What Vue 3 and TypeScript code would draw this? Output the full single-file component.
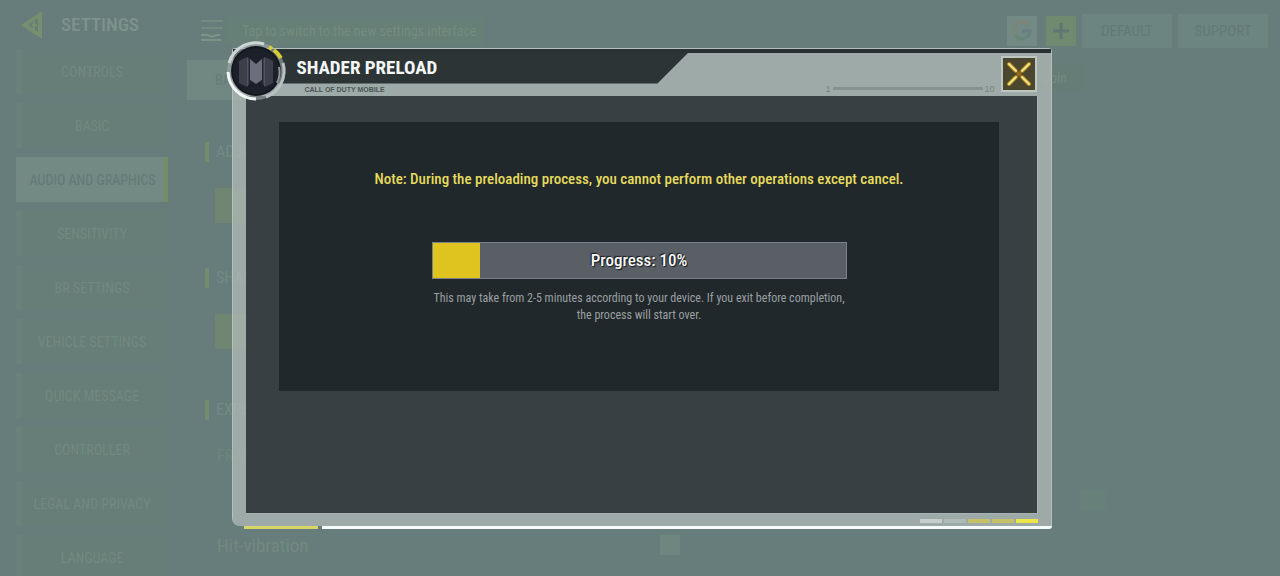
<script setup lang="ts">
import { ref } from 'vue'

interface NavItem {
  label: string
  active?: boolean
}

const navItems: NavItem[] = [
  { label: 'CONTROLS' },
  { label: 'BASIC' },
  { label: 'AUDIO AND GRAPHICS', active: true },
  { label: 'SENSITIVITY' },
  { label: 'BR SETTINGS' },
  { label: 'VEHICLE SETTINGS' },
  { label: 'QUICK MESSAGE' },
  { label: 'CONTROLLER' },
  { label: 'LEGAL AND PRIVACY' },
  { label: 'LANGUAGE' },
]

const progress = ref(10)
const fillWidth = ref(48 / 4.14)
const segments = ['pale', 'dim', 'gold', 'gold', 'bright']
</script>

<template>
  <div class="screen">
    <div class="settings">
      <aside class="sidebar">
        <header class="brand">
          <button class="back" type="button" aria-label="Back">
            <svg width="26" height="32" viewBox="0 0 26 32">
              <path d="M23 2 V30 L2 16 Z M19 9 L9 16 L19 23 Z" fill="#768f6e" fill-rule="evenodd" />
              <path d="M15 12 V20 M13 16 H18" stroke="#768f6e" stroke-width="2" />
            </svg>
          </button>
          <h1>SETTINGS</h1>
        </header>
        <nav>
          <button
            v-for="item in navItems"
            :key="item.label"
            type="button"
            class="nav-item"
            :class="{ active: item.active }"
          >
            {{ item.label }}
          </button>
        </nav>
      </aside>

      <main class="main">
        <header class="topbar">
          <button class="switch" type="button" aria-label="Switch interface">
            <svg width="26" height="26" viewBox="0 0 26 26" fill="none" stroke-width="2">
              <path d="M2 3 H24 M2 10 H24" stroke="#728a80" />
              <path d="M2 17 H9 L13 19 L17 17 H21 M2 22 H22" stroke="#7a9486" />
            </svg>
          </button>
          <p class="hint">Tap to switch to the new settings interface</p>
          <div class="actions">
            <button class="square" type="button" aria-label="Google">
              <svg width="22" height="22" viewBox="0 0 22 22" fill="none" stroke-width="3">
                <path d="M18 5 A8 8 0 0 0 4 7" stroke="#7f8479" />
                <path d="M4 7 A9 9 0 0 0 4 15" stroke="#7b8874" />
                <path d="M4 15 A8 8 0 0 0 16 17" stroke="#668679" />
                <path d="M16 17 A8 8 0 0 0 19 11 H11" stroke="#677f82" />
              </svg>
            </button>
            <button class="square plus" type="button" aria-label="Add">
              <svg width="20" height="20" viewBox="0 0 20 20">
                <path d="M10 2 V18 M2 10 H18" stroke="#5f7772" stroke-width="3" />
              </svg>
            </button>
            <button class="action" type="button">DEFAULT</button>
            <button class="action" type="button">SUPPORT</button>
            <span class="tip">Join</span>
          </div>
        </header>
        <button class="tab" type="button">BASIC</button>
        <section>
          <h2>ADJUST</h2>
          <button class="chip" type="button" aria-label="Adjust"></button>
        </section>
        <section>
          <h2>SHADER</h2>
          <button class="chip" type="button" aria-label="Shader"></button>
        </section>
        <section class="rows">
          <h2>EXPERT</h2>
          <div class="row">FRAME</div>
          <div class="row end"><i class="box wide"></i></div>
          <div class="row">
            <span class="name">Hit-vibration</span>
            <i class="box"></i>
          </div>
        </section>
      </main>
    </div>

    <div class="overlay">
      <div class="dialog" role="dialog" aria-modal="true" aria-labelledby="dialog-title">
        <svg class="emblem" width="64" height="64" viewBox="0 0 64 64">
          <circle cx="32" cy="32" r="29" fill="#9fabab" fill-opacity=".6" />
          <circle cx="32" cy="32" r="25" fill="#15181f" />
          <circle cx="32" cy="32" r="23" fill="#1c2029" />
          <path d="M15 22 L23 18 V48 L15 44 Z" fill="#3d3f4b" />
          <path d="M49 22 L41 18 V48 L49 44 Z" fill="#3d3f4b" />
          <path d="M23 18 L25 20 V45 L23 48 Z M41 18 L39 20 V45 L41 48 Z" fill="#53555f" />
          <path d="M26 20 L32 25 L38 20 V41 L32 45 L26 41 Z" fill="#6c6e7b" />
          <path d="M25 19 V46 M39 19 V46" stroke="#292c36" stroke-width="1" />
          <g fill="none">
            <path d="M5 24 A28 28 0 0 1 40 5" stroke="#ccd5d4" stroke-width="3" />
            <path d="M4 33 A28 28 0 0 0 32 60" stroke="#f2f6f5" stroke-width="3" />
            <path d="M42 58 A28 28 0 0 0 59 24" stroke="#b9c2c2" stroke-width="3" />
            <path d="M55 28 A24 24 0 0 1 53 44" stroke="#8e9797" stroke-width="2" />
            <path d="M45 8 A28 28 0 0 1 48 10 M50 11 A28 28 0 0 1 57 19" stroke="#d8cb38" stroke-width="4" />
          </g>
        </svg>

        <div class="frame">
          <header class="head">
            <div class="title-bar">
              <h2 id="dialog-title">SHADER PRELOAD</h2>
            </div>
            <p class="subtitle">CALL OF DUTY MOBILE</p>
            <div class="scale"><span>1</span><i></i><span>10</span></div>
            <button class="close" type="button" aria-label="Close">
              <svg width="32" height="32" viewBox="0 0 32 32" stroke-linecap="round">
                <path d="M6 6 L13 13 M26 6 L19 13 M6 26 L13 19 M26 26 L19 19" stroke="#b08a1e" stroke-width="4" />
                <path d="M13 13 L19 19 M19 13 L13 19" stroke="#8f681c" stroke-width="3" />
                <path d="M6 6 L13 13 M26 6 L19 13 M6 26 L13 19 M26 26 L19 19" stroke="#f5e389" stroke-width="2" />
              </svg>
            </button>
          </header>
          <div class="body">
            <div class="panel">
              <p class="note">
                Note: During the preloading process, you cannot perform other operations except cancel.
              </p>
              <div
                class="bar"
                role="progressbar"
                aria-label="Progress"
                :aria-valuenow="progress"
                aria-valuemin="0"
                aria-valuemax="100"
              >
                <div class="fill" :style="{ width: fillWidth + '%' }"></div>
                <span class="bar-text">Progress: {{ progress }}%</span>
              </div>
              <p class="detail">
                This may take from 2-5 minutes according to your device. If you exit before completion,<br />
                the process will start over.
              </p>
            </div>
          </div>
          <div class="segments">
            <i v-for="(tone, index) in segments" :key="index" :class="tone"></i>
          </div>
        </div>
        <div class="underline"><i></i><b></b></div>
      </div>
    </div>
  </div>
</template>

<style>
body {
  margin: 0;
  background: #677d7b;
}
</style>

<style scoped>
.screen,
.screen * {
  box-sizing: border-box;
}

.screen {
  position: relative;
  height: 100vh;
  overflow: hidden;
  background: #677d7b;
  color: #73897f;
  font-family: 'Roboto Condensed', 'Liberation Sans Narrow', 'Liberation Sans', sans-serif;
}

button {
  margin: 0;
  padding: 0;
  border: 0;
  background: none;
  color: inherit;
  font: inherit;
}

h1,
h2,
p {
  margin: 0;
}

svg {
  display: block;
}

.settings {
  display: flex;
}

.sidebar {
  flex: none;
  width: 187px;
  padding: 0 19px 0 16px;
}

.brand {
  display: flex;
  align-items: center;
  gap: 16px;
  height: 49px;
  padding-left: 3px;
}

.brand h1 {
  color: #7d938b;
  font-size: 19px;
  font-weight: 500;
}

nav {
  display: flex;
  flex-direction: column;
  gap: 9px;
}

.nav-item {
  flex: none;
  height: 45px;
  padding-right: 6px;
  border-left: 6px solid #6a817b;
  background: #667e77;
  color: #728880;
  font-size: 14px;
  white-space: nowrap;
}

.nav-item.active {
  padding-right: 0;
  border-left-color: #728984;
  border-right: 5px solid #748c69;
  background: #728984;
  color: #627a74;
}

.main {
  flex: 1;
  padding-right: 12px;
}

.topbar {
  display: flex;
  align-items: center;
  height: 62px;
  padding-left: 12px;
}

.hint {
  margin-left: 1px;
  padding: 0 8px 0 16px;
  background: #667f77;
  color: #748c7e;
  font-size: 14px;
  line-height: 28px;
}

.actions {
  position: relative;
  display: flex;
  align-items: center;
  gap: 6px;
  margin-left: auto;
}

.square {
  display: grid;
  place-items: center;
  width: 30px;
  height: 30px;
  margin-right: 3px;
  background: #728984;
}

.square.plus {
  margin-right: 0;
  background: #708a6f;
}

.action {
  width: 90px;
  height: 34px;
  background: #6d8580;
  color: #627a74;
  font-size: 15px;
}

.tip {
  position: absolute;
  top: 50px;
  left: 28px;
  width: 50px;
  padding-right: 18px;
  background: #657d76;
  color: #738a80;
  font-size: 14px;
  line-height: 28px;
  text-align: right;
}

.tab {
  display: block;
  width: 120px;
  height: 40px;
  margin-top: -2px;
  padding-left: 28px;
  background: #708782;
  color: #657c78;
  font-size: 14px;
  text-align: left;
}

section {
  padding: 42px 0 3px 18px;
}

section.rows {
  padding-top: 48px;
}

section h2 {
  padding-left: 7px;
  border-left: 4px solid #738b6e;
  color: #738a84;
  font-size: 16px;
  font-weight: 400;
  line-height: 20px;
}

.chip {
  display: block;
  width: 32px;
  height: 35px;
  margin: 26px 0 0 10px;
  background: #718672;
}

.row {
  display: flex;
  align-items: center;
  height: 20px;
  margin-top: 25px;
  padding-left: 12px;
  color: #6e857f;
  font-size: 16px;
}

.row.end {
  justify-content: flex-end;
  padding-right: 163px;
}

.name {
  width: 443px;
  color: #728980;
  font-size: 19px;
}

.box {
  width: 20px;
  height: 20px;
  background: #6e8680;
}

.box.wide {
  width: 25px;
  background: #68807a;
}

.overlay {
  position: absolute;
  inset: 0;
  display: grid;
  place-items: center;
  padding-left: 4px;
}

.dialog {
  position: relative;
  width: 64vw;
}

.emblem {
  position: absolute;
  top: -9px;
  left: -8px;
  z-index: 1;
}

.frame {
  padding: 0 13px;
  border: 1px solid #b4bfbd;
  border-bottom: 0;
  border-radius: 3px 4px 0 8px;
  background: rgba(181, 189, 187, 0.7);
}

.head {
  display: grid;
  grid-template-columns: 1fr auto 32px;
  grid-template-rows: 31px 12px;
  column-gap: 8px;
  margin: 0 -13px;
  padding: 0 16px 0 0;
  border-top: 4px solid #293233;
}

.title-bar {
  grid-area: 1 / 1;
  width: 455px;
  padding-left: 63px;
  background: #2d3435;
  clip-path: polygon(0 0, 100% 0, 424px 100%, 0 100%);
}

.title-bar h2 {
  color: #f4f7f7;
  font-size: 19px;
  font-weight: 700;
  line-height: 30px;
}

.subtitle {
  grid-area: 2 / 1;
  padding-left: 71px;
  color: #4a5554;
  font-family: 'Liberation Sans', sans-serif;
  font-size: 7px;
  font-weight: 700;
  line-height: 11px;
}

.scale {
  grid-area: 1 / 2 / 3 / 3;
  display: flex;
  align-items: center;
  align-self: end;
  gap: 2px;
  color: #788481;
  font-family: 'Liberation Sans', sans-serif;
  font-size: 9px;
  line-height: 14px;
}

.scale i {
  width: 150px;
  height: 3px;
  background: #85928f;
}

.close {
  grid-area: 1 / 3 / 3 / 4;
  align-self: center;
  height: 32px;
  background: #4b472f;
  outline: 2px solid #bdc6c1;
}

.body {
  min-height: 418px;
  padding: 26px 38px 26px 33px;
  border: 1px solid #a9b4b2;
  border-width: 0 1px 1px 0;
  background: #384044;
}

.panel {
  display: flex;
  flex-direction: column;
  align-items: center;
  min-height: 269px;
  padding: 46px 20px;
  background: #20282b;
}

.note {
  color: #e6db5c;
  font-size: 15px;
  font-weight: 500;
  line-height: 22px;
  text-align: center;
}

.bar {
  position: relative;
  display: grid;
  width: 415px;
  max-width: 100%;
  height: 37px;
  margin-top: 52px;
  border: 1px solid #7b8286;
  background: #595f65;
}

.fill {
  grid-area: 1 / 1;
  background: #dfc31f;
}

.bar-text {
  grid-area: 1 / 1;
  z-index: 1;
  color: #f7f8f8;
  font-size: 17px;
  font-weight: 500;
  line-height: 35px;
  text-align: center;
  text-shadow: 1px 1px 1px #16191c, -1px -1px 1px #16191c;
}

.detail {
  margin-top: 11px;
  color: #9b9fa1;
  font-size: 12px;
  line-height: 17px;
  text-align: center;
}

.segments {
  display: flex;
  justify-content: flex-end;
  align-items: center;
  gap: 2px;
  height: 12px;
  padding-top: 3px;
}

.segments i {
  width: 22px;
  height: 4px;
  background: #c6cdcb;
}

.segments .dim {
  background: #afb9b6;
}

.segments .gold {
  background: #c5c169;
}

.segments .bright {
  background: #eee548;
}

.underline {
  display: flex;
  gap: 4px;
  height: 3px;
  padding-left: 12px;
}

.underline i {
  width: 74px;
  background: #d7d468;
}

.underline b {
  flex: 1;
  border-radius: 0 0 3px 0;
  background: #f4fbf8;
}
</style>
